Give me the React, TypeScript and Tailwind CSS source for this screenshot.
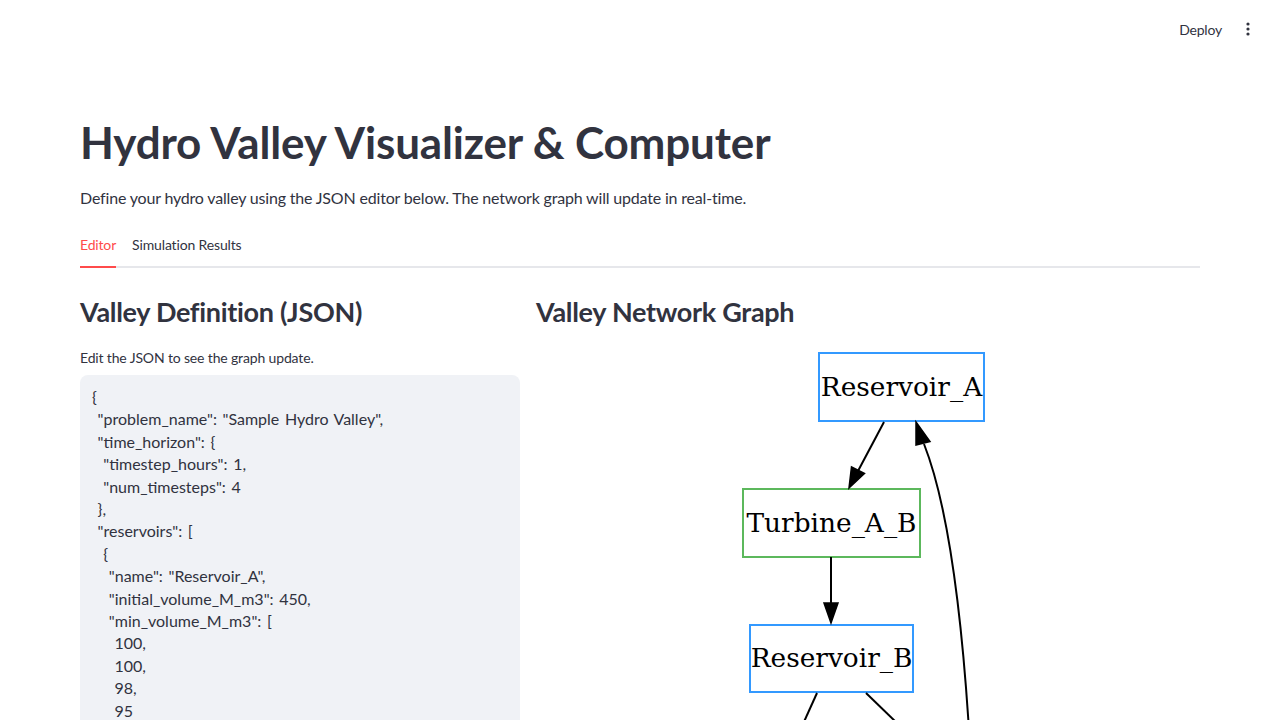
import React from "react";

const json = `{
 "problem_name": "Sample Hydro Valley",
 "time_horizon": {
  "timestep_hours": 1,
  "num_timesteps": 4
 },
 "reservoirs": [
  {
   "name": "Reservoir_A",
   "initial_volume_M_m3": 450,
   "min_volume_M_m3": [
    100,
    100,
    98,
    95
   ],
   "max_volume_M_m3": [
    500,
    500
   ]
  }
 ]
}`;

function Graph() {
  // coordinates relative to origin (536, 346)
  const ox = 536;
  const oy = 346;
  const X = (x: number) => x - ox;
  const Y = (y: number) => y - oy;
  const font = "'DejaVu Serif', serif";
  return (
    <svg width="664" height="400" viewBox="0 0 664 400" className="block">
      {/* Reservoir_A */}
      <rect x={X(819)} y={Y(353)} width={165} height={68} fill="white" stroke="#3399ff" strokeWidth={2} />
      <text x={X(901.5)} y={Y(396)} textAnchor="middle" fontFamily={font} fontSize={26.4} fill="#000">Reservoir_A</text>
      {/* Turbine_A_B */}
      <rect x={X(743)} y={Y(489)} width={177} height={68} fill="white" stroke="#5cb85c" strokeWidth={2} />
      <text x={X(831.5)} y={Y(532)} textAnchor="middle" fontFamily={font} fontSize={26.4} fill="#000">Turbine_A_B</text>
      {/* Reservoir_B */}
      <rect x={X(750)} y={Y(625)} width={163} height={67} fill="white" stroke="#3399ff" strokeWidth={2} />
      <text x={X(831.5)} y={Y(667)} textAnchor="middle" fontFamily={font} fontSize={26.4} fill="#000">Reservoir_B</text>

      {/* edge A -> Turbine */}
      <line x1={X(884)} y1={Y(422)} x2={X(858)} y2={Y(471)} stroke="#000" strokeWidth={2} />
      <polygon points={`${X(849)},${Y(488)} ${X(864.5)},${Y(473.5)} ${X(851.5)},${Y(467)}`} fill="#000" stroke="#000" strokeWidth={1.5} />
      {/* edge Turbine -> B */}
      <line x1={X(831)} y1={Y(557)} x2={X(831)} y2={Y(603)} stroke="#000" strokeWidth={2} />
      <polygon points={`${X(831)},${Y(623)} ${X(824)},${Y(603)} ${X(838)},${Y(603)}`} fill="#000" stroke="#000" strokeWidth={1.5} />
      {/* edges out of B */}
      <line x1={X(817)} y1={Y(693)} x2={X(803)} y2={Y(724)} stroke="#000" strokeWidth={2} />
      <line x1={X(866)} y1={Y(693)} x2={X(898)} y2={Y(724)} stroke="#000" strokeWidth={2} />
      {/* curve back to A */}
      <path d={`M ${X(969)} ${Y(730)} C ${X(962)} ${Y(620)}, ${X(950)} ${Y(510)}, ${X(924)} ${Y(444)}`} fill="none" stroke="#000" strokeWidth={2} />
      <polygon points={`${X(916)},${Y(422)} ${X(930)},${Y(441.5)} ${X(916)},${Y(445)}`} fill="#000" stroke="#000" strokeWidth={1.5} />
    </svg>
  );
}

export default function App() {
  return (
    <div className="relative h-[720px] overflow-hidden bg-white text-[#31333f] font-['Source_Sans_Pro','Lato',sans-serif]">
      {/* header */}
      <div className="absolute top-0 left-0 right-0 h-[58px] flex items-center justify-end pr-[24px]">
        <span className="text-[14px] tracking-[-0.2px] text-[#31333f] mr-[18px]">Deploy</span>
        <svg width="16" height="16" viewBox="0 0 16 16">
          <circle cx="8" cy="3" r="1.6" fill="#31333f" />
          <circle cx="8" cy="8" r="1.6" fill="#31333f" />
          <circle cx="8" cy="13" r="1.6" fill="#31333f" />
        </svg>
      </div>

      <div className="pt-[96px] px-[80px]">
        <h1 className="pt-[20px] pb-[16px] text-[44px] leading-[52.8px] font-bold tracking-[-0.15px]">
          Hydro Valley Visualizer &amp; Computer
        </h1>
        <p className="text-[16px] leading-[25.6px] tracking-[-0.18px]">
          Define your hydro valley using the JSON editor below. The network graph will update in real-time.
        </p>

        {/* tabs */}
        <div className="mt-[16px] flex border-b-2 border-[#e6e7eb] h-[42px]">
          <div className="h-[42px] pb-[4px] flex items-center border-b-2 border-[#ff4b4b] -mb-[2px] text-[14px] tracking-[-0.15px] text-[#ff4b4b] mr-[16px]">
            Editor
          </div>
          <div className="h-[42px] pb-[4px] flex items-center border-b-2 border-transparent -mb-[2px] text-[14px] tracking-[-0.15px] text-[#31333f]">
            Simulation Results
          </div>
        </div>

        <div className="pt-[16px] flex gap-[16px]">
          <div className="w-[440px] shrink-0">
            <h3 className="pt-[11px] pb-[17px] text-[27px] leading-[33.6px] font-bold tracking-[-0.3px]">Valley Definition (JSON)</h3>
            <div className="h-[24px] flex items-center text-[14px] tracking-[-0.15px] mb-[5px]">Edit the JSON to see the graph update.</div>
            <div className="bg-[#f0f2f6] rounded-lg pl-[12px] pr-[12px] pt-[11px] pb-[12px] h-[500px]">
              <pre className="font-['Source_Sans_Pro','Lato',sans-serif] text-[16px] leading-[22.4px] whitespace-pre-wrap [word-spacing:1.5px] text-[#31333f]">{json}</pre>
            </div>
          </div>
          <div className="flex-1">
            <h3 className="pt-[11px] pb-[17px] text-[27px] leading-[33.6px] font-bold tracking-[-0.3px]">Valley Network Graph</h3>
            <Graph />
          </div>
        </div>
      </div>
    </div>
  );
}
